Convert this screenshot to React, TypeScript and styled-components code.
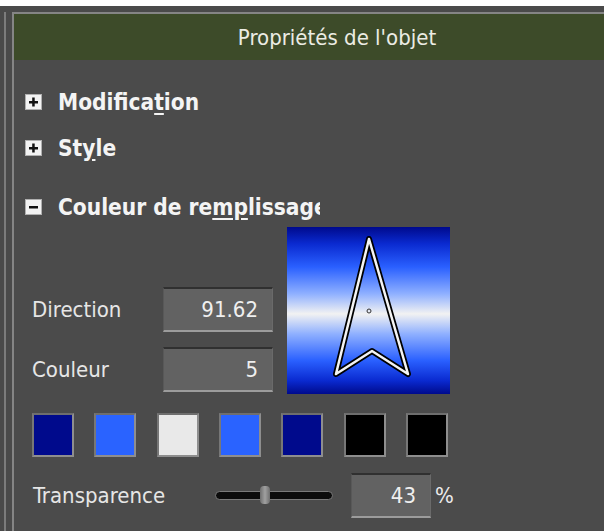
import styled, { createGlobalStyle } from 'styled-components'

const GlobalStyle = createGlobalStyle`
  html, body {
    margin: 0;
    padding: 0;
    background: #ffffff;
    overflow: hidden;
  }
  body {
    font-family: "DejaVu Sans Condensed", "DejaVu Sans", sans-serif;
  }
`

const Frame = styled.div`
  margin-top: 6px;
  height: 525px;
  background: #4a4a4a;
  padding: 6px 0 0 4px;
  box-sizing: border-box;
`

const FrameInner = styled.div`
  height: 100%;
  border-left: 2px solid #7c7c7c;
  padding-left: 6px;
`

const Panel = styled.div`
  height: 100%;
  border-left: 2px solid #858585;
  border-top: 2px solid #858585;
  background: #4b4b4b;
  color: #ececec;
`

const Header = styled.div`
  height: 46px;
  background: #3d4b29;
  display: flex;
  align-items: center;
  justify-content: center;
  padding-left: 56px;
  font-size: 22px;
  color: #ecece4;
`

const SectionRow = styled.div<{ $top: number }>`
  margin-top: ${p => p.$top}px;
  height: 30px;
  display: flex;
  align-items: center;
  padding-left: 11px;
  gap: 16px;
`

const SectionTitle = styled.span<{ $clip?: number }>`
  font-weight: bold;
  font-size: 22.5px;
  color: #f4f4f4;
  white-space: nowrap;
  overflow: hidden;
  max-width: ${p => (p.$clip ? `${p.$clip}px` : 'none')};
`

const Key = styled.span`
  text-decoration: underline;
  text-underline-offset: 3px;
`

const FillPanel = styled.div`
  margin-top: 5px;
  display: flex;
  align-items: flex-end;
  padding-left: 18px;
`

const Fields = styled.div`
  display: flex;
  flex-direction: column;
  gap: 15px;
  margin-right: 14px;
  margin-bottom: 2px;
`

const FieldRow = styled.div`
  display: flex;
  align-items: center;
`

const Label = styled.span<{ $w: number }>`
  width: ${p => p.$w}px;
  font-size: 22px;
  color: #e6e6e6;
`

const ValueBox = styled.div<{ $w: number }>`
  width: ${p => p.$w}px;
  height: 45px;
  box-sizing: border-box;
  background: #626262;
  border-top: 2px solid #303030;
  border-bottom: 2px solid #9c9c9c;
  border-left: 1px solid #585858;
  border-right: 1px solid #6a6a6a;
  display: flex;
  align-items: center;
  justify-content: flex-end;
  padding-right: 14px;
  font-size: 22px;
  color: #efefef;
`

const Preview = styled.div`
  width: 163px;
  height: 167px;
  background: linear-gradient(
    to bottom,
    #000a8c 0%,
    #0a2ad0 10%,
    #2a60ff 24%,
    #8fb0ff 40%,
    #f2f2f2 52%,
    #8fb0ff 64%,
    #2a60ff 80%,
    #0a2ad0 92%,
    #000a8c 100%
  );
`

const Swatches = styled.div`
  margin-top: 19px;
  margin-left: 18px;
  width: 416px;
  display: flex;
  justify-content: space-between;
`

const Swatch = styled.div<{ $c: string }>`
  width: 42px;
  height: 44px;
  box-sizing: border-box;
  background: ${p => p.$c};
  border: 2px solid #8e8e8e;
  border-top-color: #6e6e6e;
  border-left-color: #777777;
`

const TransRow = styled.div`
  margin-top: 16px;
  padding-left: 19px;
  display: flex;
  align-items: center;
`

const Slider = styled.div`
  position: relative;
  width: 118px;
  height: 9px;
  box-sizing: border-box;
  background: #0c0c0c;
  border: 1px solid #7a7a7a;
  border-radius: 5px;
  margin-right: 18px;
`

const Thumb = styled.div`
  position: absolute;
  left: 44px;
  top: -6px;
  width: 10px;
  height: 18px;
  border-radius: 4px;
  background: linear-gradient(to right, #6e6e6e, #a0a0a0 50%, #6e6e6e);
`

const Percent = styled.span`
  margin-left: 4px;
  font-size: 22px;
  color: #ececec;
`

const PlusBox = ({ minus }: { minus?: boolean }) => (
  <svg width="17" height="16" viewBox="0 0 17 16">
    <rect x="0.5" y="0.5" width="16" height="15" fill="#f2f2f2" stroke="#b0b0b0" />
    <rect x="4" y="7" width="9" height="2.5" fill="#111" />
    {!minus && <rect x="7.2" y="3.5" width="2.5" height="9" fill="#111" />}
  </svg>
)

const arrowPoints = '82,12 49,147 85,124 121,147'

const Arrow = () => (
  <svg width="163" height="167" viewBox="0 0 163 167">
    <polygon points={arrowPoints} fill="none" stroke="#000" strokeWidth="6" strokeLinejoin="round" />
    <polygon points={arrowPoints} fill="none" stroke="#f4f4f4" strokeWidth="2.5" strokeLinejoin="round" />
    <circle cx="82" cy="84" r="2" fill="none" stroke="#333" strokeWidth="1" />
  </svg>
)

const swatchColors = ['#000a8c', '#2a63ff', '#e9e9e9', '#2a63ff', '#000a8c', '#000000', '#000000']

export default function App() {
  return (
    <>
      <GlobalStyle />
      <Frame>
        <FrameInner>
          <Panel>
            <Header>Propriétés de l'objet</Header>

            <SectionRow $top={27}>
              <PlusBox />
              <SectionTitle>
                Modifica<Key>t</Key>ion
              </SectionTitle>
            </SectionRow>

            <SectionRow $top={16}>
              <PlusBox />
              <SectionTitle>
                St<Key>y</Key>le
              </SectionTitle>
            </SectionRow>

            <SectionRow $top={29}>
              <PlusBox minus />
              <SectionTitle $clip={262}>
                Couleur de re<Key>mp</Key>lissage
              </SectionTitle>
            </SectionRow>

            <FillPanel>
              <Fields>
                <FieldRow>
                  <Label $w={131}>Direction</Label>
                  <ValueBox $w={110}>91.62</ValueBox>
                </FieldRow>
                <FieldRow>
                  <Label $w={131}>Couleur</Label>
                  <ValueBox $w={110}>5</ValueBox>
                </FieldRow>
              </Fields>
              <Preview>
                <Arrow />
              </Preview>
            </FillPanel>

            <Swatches>
              {swatchColors.map((c, i) => (
                <Swatch key={i} $c={c} />
              ))}
            </Swatches>

            <TransRow>
              <Label $w={182}>Transparence</Label>
              <Slider>
                <Thumb />
              </Slider>
              <ValueBox $w={80}>43</ValueBox>
              <Percent>%</Percent>
            </TransRow>
          </Panel>
        </FrameInner>
      </Frame>
    </>
  )
}
